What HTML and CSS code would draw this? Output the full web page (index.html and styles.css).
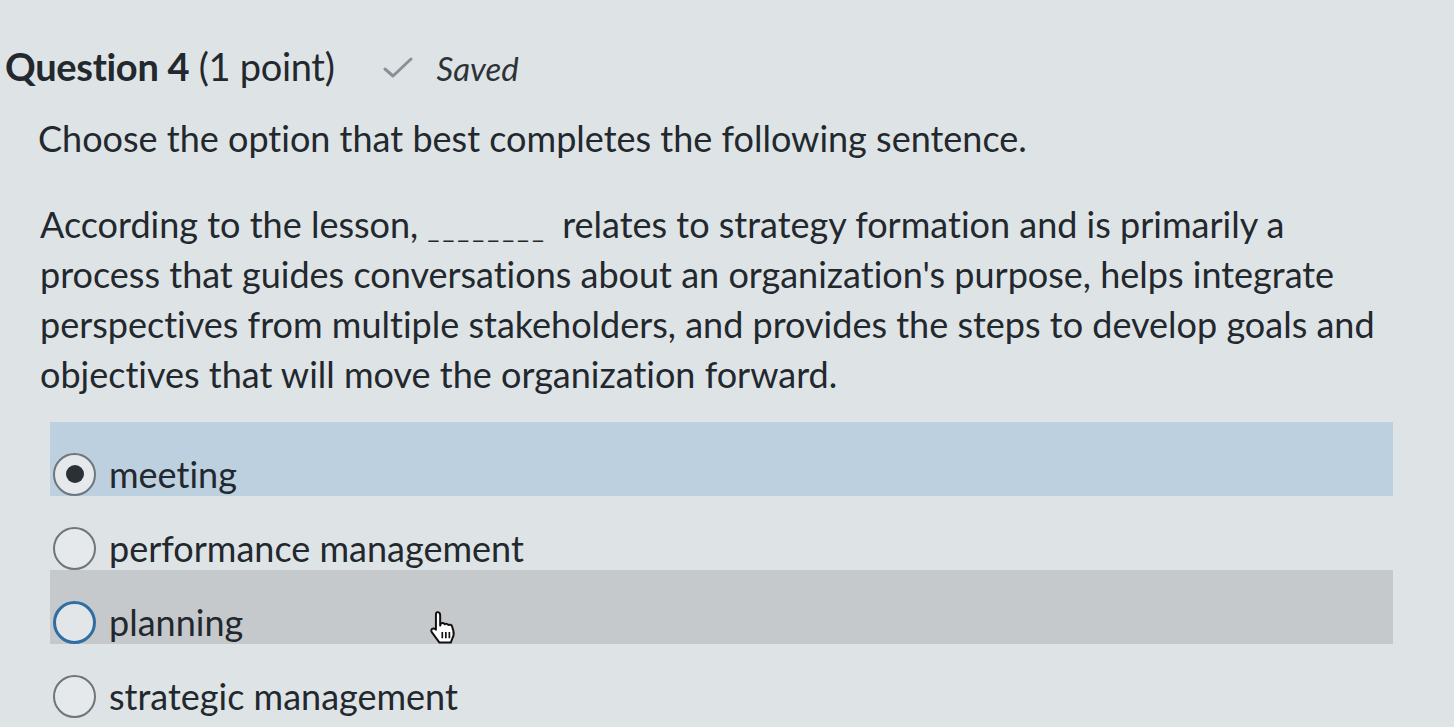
FILE: index.html
```html
<!DOCTYPE html>
<html lang="en">
<head>
<meta charset="utf-8">
<title>Question 4</title>
<link rel="stylesheet" href="styles.css">
</head>
<body>
<main class="page">
  <header class="q-header">
    <h2 class="q-title"><span class="q-num">Question 4</span> (1 point)</h2>
    <span class="saved">
      <svg class="check" viewBox="0 0 30 22" width="30" height="22" aria-hidden="true"><path d="M2 12 L10 19 L28 2" fill="none" stroke="#8a9196" stroke-width="3" stroke-linecap="round" stroke-linejoin="round"/></svg>
      <em>Saved</em>
    </span>
  </header>
  <p class="prompt">Choose the option that best completes the following sentence.</p>
  <p class="stem">According to the lesson, <span class="blank">________</span> relates to strategy formation and is primarily a process that guides conversations about an organization's purpose, helps integrate perspectives from multiple stakeholders, and provides the steps to develop goals and objectives that will move the organization forward.</p>
  <ul class="options">
    <li class="option selected"><span class="radio checked"></span><span class="label">meeting</span></li>
    <li class="option"><span class="radio"></span><span class="label">performance management</span></li>
    <li class="option hover"><span class="radio focus"></span><span class="label">planning</span>
      <svg class="cursor" viewBox="2 1 18 24" width="26" height="34" aria-hidden="true"><path d="M7 2.5c1.2 0 2 .8 2 2V12l.5-1.5c1-.6 2.3-.3 2.7.6.8-.6 2.1-.4 2.6.5.8-.5 2.2-.2 2.6.9l.9 3.2c.5 2 .2 4-.8 5.6L16.5 24h-8L3.2 16.8c-.8-1-.5-2.2.5-2.6.9-.4 1.8 0 2.3.7V4.5c0-1.2.5-2 1-2z" fill="#fff" stroke="#111" stroke-width="1.4" stroke-linejoin="round"/><path d="M10.5 16.5v4.5M13 16.5v4.5M15.5 16.5v4.5" stroke="#111" stroke-width="1.2"/></svg>
    </li>
    <li class="option"><span class="radio"></span><span class="label">strategic management</span></li>
  </ul>
</main>
</body>
</html>
```
FILE: styles.css
```css
html, body {
  margin: 0;
  padding: 0;
  background: #dee3e6;
}
body {
  font-family: Lato, "Open Sans", "Liberation Sans", sans-serif;
  color: #22282d;
  font-variant-ligatures: none;
}
.page {
  padding: 40px 40px 0 5px;
}
.q-header {
  display: flex;
  align-items: baseline;
  gap: 48px;
}
.q-title {
  margin: 0;
  font-size: 38px;
  font-weight: 400;
  line-height: 52px;
  letter-spacing: -0.3px;
}
.q-num {
  font-weight: 700;
}
.saved {
  display: inline-flex;
  align-items: baseline;
  gap: 24px;
  color: #2c3338;
  font-size: 33px;
}
.check {
  position: relative;
  top: -2px;
}
.saved em {
  font-style: italic;
}
.prompt {
  margin: 22px 0 0 33px;
  font-size: 36px;
  line-height: 48px;
}
.stem {
  margin: 37px 0 0 35px;
  font-size: 36px;
  line-height: 50px;
  max-width: 1360px;
}
.blank {
  font-size: 26px;
  line-height: 0;
  letter-spacing: 3px;
  margin-right: 6px;
}
.options {
  list-style: none;
  margin: 23px 0 0 45px;
  padding: 0;
  width: 1343px;
}
.option {
  position: relative;
  box-sizing: border-box;
  display: flex;
  align-items: center;
  gap: 13px;
  height: 74px;
  padding: 30px 0 0 3px;
  font-size: 36px;
}
.option.selected {
  background: #bdd0e0;
}
.option.hover {
  background: #c6c9cb;
}
.radio {
  box-sizing: border-box;
  width: 43px;
  height: 43px;
  border-radius: 50%;
  border: 2px solid #6e767c;
  background: #e6e9eb;
  display: inline-flex;
  align-items: center;
  justify-content: center;
  flex: none;
}
.radio.checked::after {
  content: "";
  width: 18px;
  height: 18px;
  border-radius: 50%;
  background: #2a3035;
}
.radio.focus {
  border: 3px solid #2f6ea3;
  background: #e3e6e8;
}
.cursor {
  position: absolute;
  left: 380px;
  top: 40px;
}
```
